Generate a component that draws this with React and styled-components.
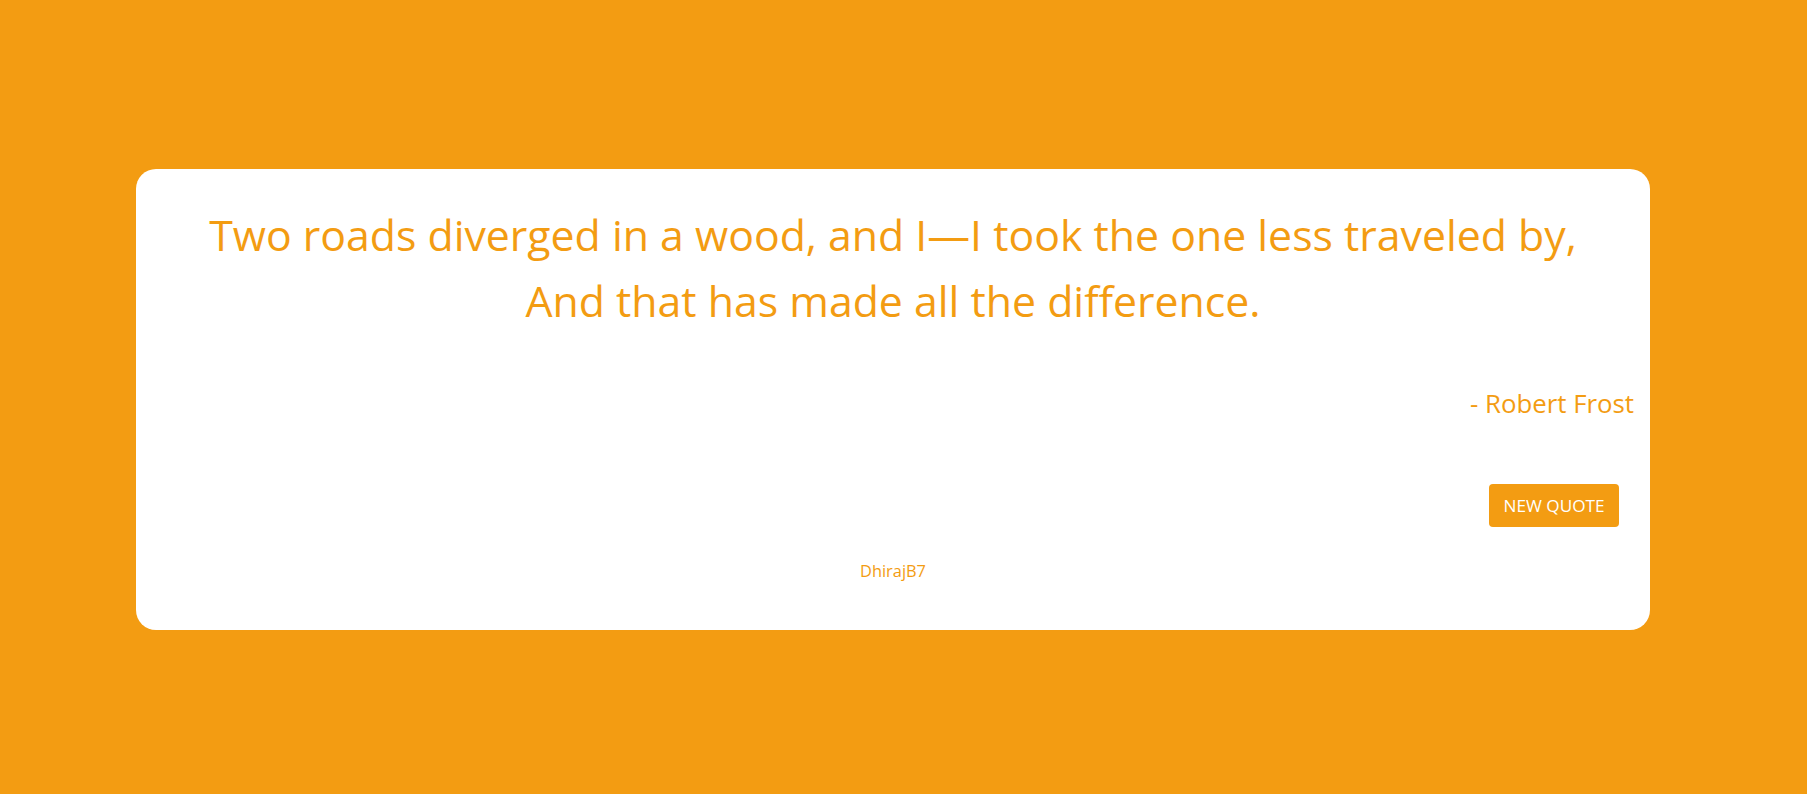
import React from "react";
import styled, { createGlobalStyle } from "styled-components";

const Global = createGlobalStyle`
  html, body { margin: 0; padding: 0; background: #f39c12; }
  body { font-family: "Open Sans", "Noto Sans", sans-serif; }
`;

const Page = styled.main`
  box-sizing: border-box;
  height: 794px;
  padding: 169px 0 0 136px;
`;

const Card = styled.section`
  box-sizing: border-box;
  width: 1514px;
  height: 461px;
  background: #ffffff;
  border-radius: 20px;
  color: #f39c12;
  display: flex;
  flex-direction: column;
  padding: 33px 16px 0 16px;
`;

const Quote = styled.p`
  margin: 0;
  text-align: center;
  font-size: 42.8px;
  line-height: 66px;
  font-weight: 400;
`;

const Author = styled.p`
  margin: 51px 0 0;
  text-align: right;
  font-size: 25.8px;
  line-height: 36px;
`;

const Actions = styled.div`
  display: flex;
  justify-content: flex-end;
  margin-top: 63px;
  padding-right: 15px;
`;

const Button = styled.button`
  box-sizing: border-box;
  width: 130px;
  height: 43px;
  border: none;
  border-radius: 4px;
  background: #f39c12;
  color: #ffffff;
  font-family: "Open Sans", "Noto Sans", sans-serif;
  font-size: 17.2px;
  cursor: pointer;
  padding: 0;
`;

const Credit = styled.a`
  align-self: center;
  margin-top: 32px;
  font-size: 16.4px;
  color: #f39c12;
  text-decoration: none;
`;

export default function App() {
  return (
    <>
      <Global />
      <Page>
        <Card>
          <Quote>
            Two roads diverged in a wood, and I—I took the one less traveled by,
            <br />
            And that has made all the difference.
          </Quote>
          <Author>- Robert Frost</Author>
          <Actions>
            <Button>NEW QUOTE</Button>
          </Actions>
          <Credit href="#">DhirajB7</Credit>
        </Card>
      </Page>
    </>
  );
}
